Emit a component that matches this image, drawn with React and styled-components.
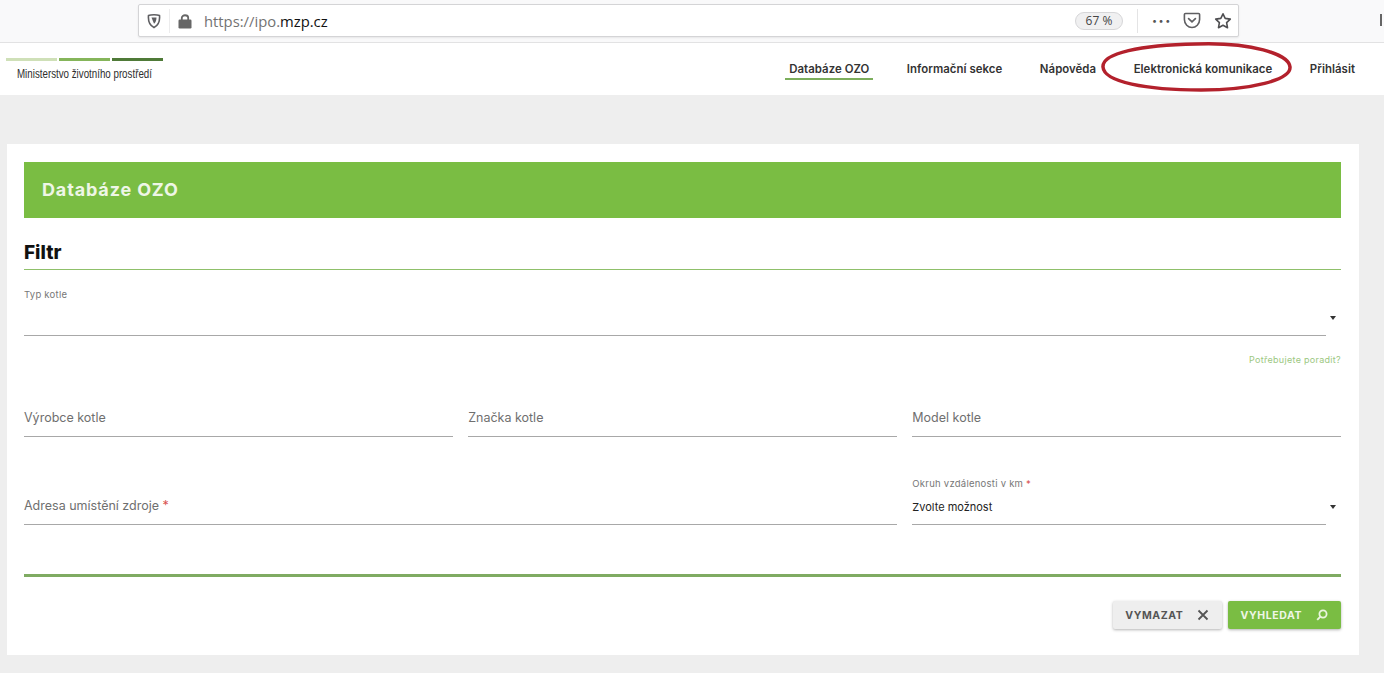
import React from "react";
import styled, { createGlobalStyle } from "styled-components";

const GlobalStyle = createGlobalStyle`
  html, body {
    margin: 0;
    padding: 0;
    height: 100%;
    background: #eeeeee;
    font-family: "Inter", "Liberation Sans", sans-serif;
  }
`;

const App = () => {
    return (
        <Page>
            <GlobalStyle />

            {/* Browser toolbar */}
            <BrowserBar>
                <UrlBox>
                    <ShieldIcon />
                    <UrlDivider />
                    <LockIcon />
                    <UrlText>
                        https://ipo.<b>mzp.cz</b>
                    </UrlText>
                    <ZoomPill>67 %</ZoomPill>
                    <ActionDivider />
                    <Dots>•••</Dots>
                    <PocketIcon />
                    <StarIcon />
                </UrlBox>
                <SidebarMark />
            </BrowserBar>

            {/* Site header */}
            <Header>
                <Logo>
                    <LogoBars>
                        <LogoBar color="#cfe0b8" />
                        <LogoBar color="#85b55a" />
                        <LogoBar color="#4f7a38" />
                    </LogoBars>
                    <LogoText>Ministerstvo životního prostředí</LogoText>
                </Logo>
                <Nav>
                    <NavItem active>Databáze OZO</NavItem>
                    <NavItem>Informační sekce</NavItem>
                    <NavItem>Nápověda</NavItem>
                    <NavItem>Elektronická komunikace</NavItem>
                    <NavItem>Přihlásit</NavItem>
                </Nav>
                <RedCircle viewBox="0 0 192 52" fill="none">
                    <path
                        d="M95 2C150 0 188 12 189 25C190 38 150 48 100 48C45 48 3 40 2 25C1 11 40 3 95 2Z"
                        stroke="#b3212c"
                        strokeWidth="3.5"
                    />
                </RedCircle>
            </Header>

            {/* Main card */}
            <Main>
                <Card>
                    <Banner>Databáze OZO</Banner>
                    <FilterTitle>Filtr</FilterTitle>

                    <TopSelect>
                        <SmallLabel>Typ kotle</SmallLabel>
                        <SelectLine>
                            <Arrow />
                        </SelectLine>
                    </TopSelect>

                    <HelpLink>Potřebujete poradit?</HelpLink>

                    <FieldGrid>
                        <TextField>Výrobce kotle</TextField>
                        <TextField>Značka kotle</TextField>
                        <TextField>Model kotle</TextField>
                    </FieldGrid>

                    <AddressRow>
                        <AddressField>
                            Adresa umístění zdroje <Required>*</Required>
                        </AddressField>
                        <div>
                            <SmallLabel>
                                Okruh vzdálenosti v km <Required>*</Required>
                            </SmallLabel>
                            <SelectLine>
                                <SelectValue>Zvolte možnost</SelectValue>
                                <Arrow />
                            </SelectLine>
                        </div>
                    </AddressRow>

                    <ThickLine />

                    <Buttons>
                        <ActionButton>
                            VYMAZAT
                            <svg width="12" height="12" viewBox="0 0 12 12" fill="none">
                                <path d="M1.5 1.5l9 9M10.5 1.5l-9 9" stroke="#555" strokeWidth="1.8" />
                            </svg>
                        </ActionButton>
                        <ActionButton primary>
                            VYHLEDAT
                            <svg width="12" height="12" viewBox="0 0 12 12" fill="none">
                                <circle cx="7" cy="5" r="3.6" stroke="#eaf5df" strokeWidth="1.8" />
                                <path d="M4.4 7.6L1.2 10.8" stroke="#eaf5df" strokeWidth="1.9" />
                            </svg>
                        </ActionButton>
                    </Buttons>
                </Card>
            </Main>
        </Page>
    );
};

export default App;

// Browser toolbar icons
const ShieldIcon = () => (
    <svg width="14" height="16" viewBox="0 0 14 16" fill="none" style={{ marginLeft: 8 }}>
        <path d="M1.5 2.5C4 1.5 10 1.5 12.5 2.5C13 8 11 12.5 7 14.5C3 12.5 1 8 1.5 2.5Z" stroke="#5f5f62" strokeWidth="1.6" />
        <path d="M4.5 4.6H9.5C9.5 7.5 8.6 9.6 7 10.8Z" fill="#5f5f62" />
    </svg>
);

const LockIcon = () => (
    <svg width="14" height="16" viewBox="0 0 14 16" fill="none">
        <path d="M3.8 7V4.8C3.8 1.4 10.2 1.4 10.2 4.8V7" stroke="#666" strokeWidth="1.8" />
        <rect x="0.5" y="6.5" width="13" height="9" rx="1.2" fill="#666" />
    </svg>
);

const PocketIcon = () => (
    <svg width="18" height="17" viewBox="0 0 18 17" fill="none">
        <path d="M2.5 1.5H15.5C16.2 1.5 16.6 2 16.6 2.6V7.5C16.6 12 13 15.5 9 15.5C5 15.5 1.4 12 1.4 7.5V2.6C1.4 2 1.8 1.5 2.5 1.5Z" stroke="#5f5f62" strokeWidth="1.6" />
        <path d="M5.6 6.6L9 9.8L12.4 6.6" stroke="#5f5f62" strokeWidth="1.7" strokeLinecap="round" />
    </svg>
);

const StarIcon = () => (
    <svg width="18" height="18" viewBox="0 0 18 18" fill="none" style={{ marginLeft: 13 }}>
        <path d="M9 1.8L11.2 6.4L16.3 7.1L12.6 10.6L13.5 15.7L9 13.3L4.5 15.7L5.4 10.6L1.7 7.1L6.8 6.4Z" stroke="#4f4f52" strokeWidth="1.6" strokeLinejoin="round" />
    </svg>
);

const Page = styled.div`
  min-height: 673px;
  overflow: hidden;
`;

// Browser chrome
const BrowserBar = styled.div`
  height: 43px;
  box-sizing: border-box;
  padding: 4px 0 0 138px;
  display: flex;
  align-items: flex-start;
  background: #f9f9fa;
  border-bottom: 1px solid #e2e2e3;
`;

const UrlBox = styled.div`
  width: 1101px;
  height: 33px;
  box-sizing: border-box;
  padding-right: 6px;
  display: flex;
  align-items: center;
  background: #fff;
  border: 1px solid #d4d4d6;
  border-radius: 2px;
  box-shadow: 0 1px 2px rgba(0, 0, 0, 0.08);
`;

const UrlDivider = styled.div`
  width: 1px;
  height: 24px;
  margin: 0 8px;
  background: #ececed;
`;

const UrlText = styled.div`
  margin-left: 12px;
  flex: 1;
  font-family: "Open Sans", sans-serif;
  font-size: 14.8px;
  color: #737373;

  b {
    font-weight: 400;
    color: #111;
  }
`;

const ZoomPill = styled.div`
  width: 48px;
  height: 18px;
  box-sizing: border-box;
  display: flex;
  align-items: center;
  justify-content: center;
  font-family: "Open Sans", sans-serif;
  font-size: 12px;
  color: #444;
  background: #f0f0f1;
  border: 1px solid #d6d6d8;
  border-radius: 9px;
`;

const ActionDivider = styled.div`
  width: 1px;
  height: 24px;
  margin: 0 14px;
  background: #e4e4e5;
`;

const Dots = styled.div`
  width: 31px;
  font-size: 9px;
  letter-spacing: 1.5px;
  color: #555;
`;

const SidebarMark = styled.div`
  width: 2px;
  height: 12px;
  margin: 10px 0 0 141px;
  background: #666;
`;

// Site header
const Header = styled.header`
  position: relative;
  height: 52px;
  display: flex;
  justify-content: space-between;
  background: #fff;
`;

const Logo = styled.div`
  padding: 15px 0 0 6px;
`;

const LogoBars = styled.div`
  display: flex;
  gap: 2px;
`;

const LogoBar = styled.div`
  width: 51px;
  height: 3px;
  background: ${({ color }) => color};
`;

const LogoText = styled.div`
  margin: 6px 0 0 11px;
  font-family: "Liberation Sans", sans-serif;
  font-size: 12.5px;
  line-height: 14px;
  color: #2e2e2e;
  transform: scaleX(0.78);
  transform-origin: left center;
  white-space: nowrap;
`;

const Nav = styled.nav`
  display: flex;
  gap: 37.5px;
  padding: 19px 29px 0 0;
  align-items: flex-start;
`;

const NavItem = styled.div`
  padding: 0 ${({ active }) => (active ? "4px" : "0")};
  margin: 0 ${({ active }) => (active ? "-4px" : "0")};
  height: 16px;
  font-size: 11.4px;
  line-height: 15px;
  letter-spacing: 0.05px;
  font-weight: 600;
  color: #333;
  border-bottom: ${({ active }) => (active ? "2px solid #7cae5c" : "none")};
`;

const RedCircle = styled.svg`
  position: absolute;
  left: 1101px;
  top: -1px;
  width: 192px;
  height: 52px;
`;

// Card
const Main = styled.main`
  padding: 49px 25px 18px 7px;
`;

const Card = styled.section`
  height: 511px;
  box-sizing: border-box;
  padding: 18px 18px 0 17px;
  background: #fff;
`;

const Banner = styled.div`
  height: 56px;
  box-sizing: border-box;
  padding: 0 0 2px 18px;
  display: flex;
  align-items: center;
  font-size: 18px;
  font-weight: 700;
  letter-spacing: 0.85px;
  color: #eef6e6;
  background: #7abd43;
`;

const FilterTitle = styled.h2`
  margin: 0;
  height: 52px;
  box-sizing: border-box;
  padding-top: 24px;
  font-size: 19px;
  line-height: 22px;
  font-weight: 800;
  color: #111;
  border-bottom: 1px solid #8fc06a;
`;

const SmallLabel = styled.div`
  font-size: 9.5px;
  line-height: 12px;
  letter-spacing: 0.25px;
  color: #777;
`;

const SelectLine = styled.div`
  height: 34px;
  margin-right: 15px;
  position: relative;
  display: flex;
  align-items: center;
  border-bottom: 1px solid #a8a8a8;
`;

const TopSelect = styled.div`
  padding-top: 19px;
`;

const Arrow = styled.span`
  position: absolute;
  right: -10px;
  top: 50%;
  width: 0;
  height: 0;
  margin-top: -2px;
  border-left: 3.5px solid transparent;
  border-right: 3.5px solid transparent;
  border-top: 4px solid #333;
`;

const HelpLink = styled.div`
  margin-top: 18px;
  text-align: right;
  font-size: 9px;
  line-height: 12px;
  letter-spacing: 0.3px;
  color: #9cc77f;
`;

const FieldGrid = styled.div`
  margin-top: 42px;
  display: grid;
  grid-template-columns: repeat(3, 1fr);
  column-gap: 15.5px;
`;

const TextField = styled.div`
  height: 26px;
  padding-top: 2px;
  font-size: 12.5px;
  line-height: 16px;
  color: #6f6f6f;
  border-bottom: 1px solid #a8a8a8;
`;

const AddressRow = styled(FieldGrid)`
  margin-top: 41px;
  align-items: end;
`;

const AddressField = styled(TextField)`
  grid-column: span 2;
  height: 26px;
  padding-top: 1px;
`;

const SelectValue = styled.span`
  font-size: 11px;
  color: #222;
`;

const Required = styled.span`
  color: #d9534f;
`;

const ThickLine = styled.div`
  margin-top: 49px;
  height: 3px;
  background: #7fab62;
`;

const Buttons = styled.div`
  margin-top: 24px;
  display: flex;
  justify-content: flex-end;
  gap: 6px;
`;

const ActionButton = styled.button`
  height: 28px;
  padding: 0 13px 0 12px;
  display: flex;
  align-items: center;
  gap: 14px;
  font-family: inherit;
  font-size: 10.5px;
  font-weight: 700;
  letter-spacing: 0.6px;
  border: none;
  border-radius: 2px;
  color: ${({ primary }) => (primary ? "#eef6e6" : "#555")};
  background: ${({ primary }) => (primary ? "#7abd43" : "#eeeeee")};
  box-shadow: 0 1px 3px rgba(0, 0, 0, 0.3);
`;
